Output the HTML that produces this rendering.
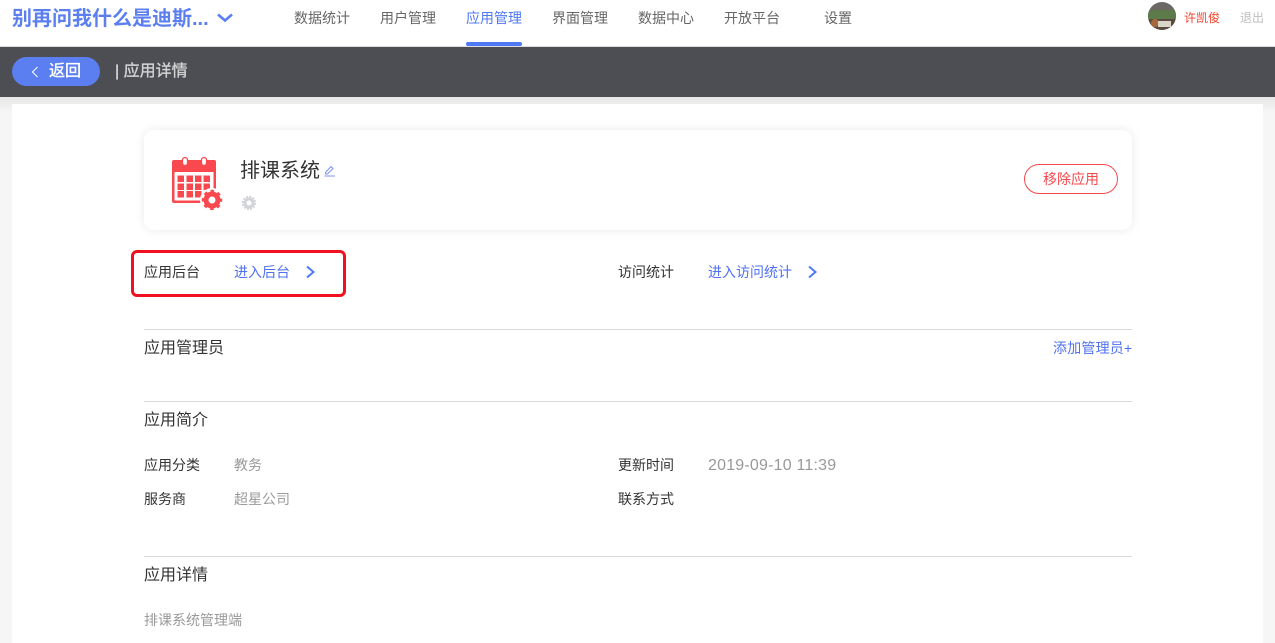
<!DOCTYPE html>
<html lang="zh-CN"><head><meta charset="utf-8"><title>应用详情</title>
<style>
*{box-sizing:border-box;margin:0;padding:0}
html,body{width:1275px;height:643px;overflow:hidden;background:#f6f6f6;font-family:"Liberation Sans","Noto Sans CJK SC",sans-serif}
.a{position:absolute;white-space:nowrap;line-height:20px}
.nav{top:8px;font-size:14px;color:#666}
.hr{position:absolute;left:144px;width:988px;height:1px;background:#d9d9d9}
.l{font-size:14px;color:#333}
.g{font-size:14px;color:#999}
.b{font-size:14px;color:#4f70f5}
.h{font-size:16px;color:#333}
</style></head><body>
<div style="position:absolute;left:0;top:0;width:1275px;height:47px;background:#fff;border-bottom:1px solid #ddd"></div>
<div class="a" style="left:12px;top:6px;font-size:20px;line-height:26px;font-weight:bold;color:#5b7ff0">别再问我什么是迪斯...</div>
<svg style="position:absolute;left:216px;top:13px" width="18" height="10" viewBox="0 0 18 10"><path d="M2 1.500L9 7.500L16 1.500" fill="none" stroke="#5b7ff0" stroke-width="2.600"/></svg>
<div class="a nav" style="left:294px">数据统计</div>
<div class="a nav" style="left:380px">用户管理</div>
<div class="a nav" style="left:466px;color:#4f78f5">应用管理</div>
<div style="position:absolute;left:466px;top:42px;width:56px;height:4px;border-radius:2px;background:#4f78f5"></div>
<div class="a nav" style="left:552px">界面管理</div>
<div class="a nav" style="left:638px">数据中心</div>
<div class="a nav" style="left:724px">开放平台</div>
<div class="a nav" style="left:824px">设置</div>
<svg style="position:absolute;left:1148px;top:2px" width="28" height="28" viewBox="0 0 28 28"><defs><clipPath id="c"><circle cx="14" cy="14" r="14"/></clipPath></defs><g clip-path="url(#c)"><rect width="28" height="28" fill="#6b6866"/><rect y="8" width="28" height="9" fill="#5d7a4a"/><rect y="17" width="28" height="11" fill="#5a4a40"/><circle cx="7" cy="21" r="4" fill="#a8673a"/><rect x="10" y="19" width="13" height="6" fill="#d9d6c8"/></g></svg>
<div class="a" style="left:1184px;top:8px;font-size:12px;color:#f5402c">许凯俊</div>
<div class="a" style="left:1240px;top:8px;font-size:12px;color:#bdbdbd">退出</div>

<div style="position:absolute;left:0;top:47px;width:1275px;height:50px;background:#4d4e53"></div>
<div style="position:absolute;left:12px;top:57px;width:88px;height:29px;border-radius:15px;background:#5b7ff0"></div>
<svg style="position:absolute;left:30px;top:65px" width="10" height="14" viewBox="0 0 10 14"><path d="M7.500 2L2.500 7L7.500 12" fill="none" stroke="#fff" stroke-width="1"/></svg>
<div class="a" style="left:49px;top:62px;font-size:16px;color:#fff;-webkit-text-stroke:.35px #fff">返回</div>
<div class="a" style="left:115px;top:62px;font-size:16px;color:#d4d4d4;-webkit-text-stroke:.35px #d4d4d4">| 应用详情</div>

<div style="position:absolute;left:0;top:97px;width:1275px;height:16px;background:linear-gradient(#e6e6e6,#f6f6f6)"></div>
<div style="position:absolute;left:12px;top:104px;width:1251px;height:539px;background:#fff"></div>

<div style="position:absolute;left:144px;top:130px;width:988px;height:100px;background:#fff;border-radius:10px;box-shadow:0 0 10px rgba(0,0,0,.09)"></div>
<svg style="position:absolute;left:170px;top:156px" width="54" height="54" viewBox="0 0 54 54">
<rect x="2" y="4" width="44" height="43" rx="2" fill="#f9494f"/>
<rect x="4.500" y="16" width="39" height="28.500" fill="#fff"/>
<rect x="12.500" y="1.500" width="5" height="8" rx="2.500" fill="#fff" stroke="#f9494f" stroke-width="1.300"/>
<rect x="31.500" y="1.500" width="5" height="8" rx="2.500" fill="#fff" stroke="#f9494f" stroke-width="1.300"/>
<g fill="#f9494f"><rect x="7.500" y="19.500" width="6.500" height="6.500"/><rect x="16.500" y="19.500" width="6.500" height="6.500"/><rect x="25" y="19.500" width="6.500" height="6.500"/><rect x="33.500" y="19.500" width="6.500" height="6.500"/><rect x="7.500" y="27.500" width="6.500" height="6.500"/><rect x="16.500" y="27.500" width="6.500" height="6.500"/><rect x="25" y="27.500" width="6.500" height="6.500"/><rect x="33.500" y="27.500" width="6.500" height="6.500"/><rect x="7.500" y="35" width="6.500" height="6.500"/><rect x="16.500" y="35" width="6.500" height="6.500"/><rect x="25" y="35" width="6.500" height="6.500"/></g>
<circle cx="42" cy="44" r="12" fill="#fff"/>
<circle cx="42" cy="44" r="6" fill="none" stroke="#f9494f" stroke-width="5"/>
<circle cx="42" cy="44" r="8.500" fill="none" stroke="#f9494f" stroke-width="3.500" stroke-dasharray="3.300 3.380" stroke-dashoffset="1.650"/>
</svg>
<div class="a" style="left:240px;top:158px;font-size:20px;line-height:26px;color:#333">排课系统</div>
<svg style="position:absolute;left:324px;top:164px" width="12" height="13" viewBox="0 0 12 13"><path d="M1.500 8.500L7 2.500L9 4.500L3.500 10H1.500ZM0.500 12H11" fill="none" stroke="#7d92f3" stroke-width="1"/></svg>
<svg style="position:absolute;left:241px;top:195px" width="16" height="16" viewBox="0 0 16 16"><circle cx="8" cy="8" r="4" fill="none" stroke="#d2d4da" stroke-width="3"/><circle cx="8" cy="8" r="6.200" fill="none" stroke="#d2d4da" stroke-width="2" stroke-dasharray="2 1.250"/></svg>
<div class="a" style="left:1024px;top:164px;width:94px;height:30px;border:1px solid #f5484d;border-radius:15px;text-align:center;font-size:14px;line-height:29px;color:#f5484d">移除应用</div>

<div style="position:absolute;left:131px;top:250px;width:215px;height:47px;border:3px solid #f0101f;border-radius:6px"></div>
<div class="a l" style="left:144px;top:262px">应用后台</div>
<div class="a b" style="left:234px;top:262px">进入后台</div>
<svg style="position:absolute;left:305px;top:265px" width="12" height="14" viewBox="0 0 12 14"><path d="M2 1.500L8.500 7L2 12.500" fill="none" stroke="#4f78f5" stroke-width="2"/></svg>
<div class="a l" style="left:618px;top:262px">访问统计</div>
<div class="a b" style="left:708px;top:262px">进入访问统计</div>
<svg style="position:absolute;left:807px;top:265px" width="12" height="14" viewBox="0 0 12 14"><path d="M2 1.500L8.500 7L2 12.500" fill="none" stroke="#4f78f5" stroke-width="2"/></svg>

<div class="hr" style="top:329px"></div>
<div class="a h" style="left:144px;top:339px">应用管理员</div>
<div class="a b" style="left:1053px;top:338px;letter-spacing:.2px">添加管理员+</div>

<div class="hr" style="top:401px"></div>
<div class="a h" style="left:144px;top:411px">应用简介</div>
<div class="a l" style="left:144px;top:455px">应用分类</div>
<div class="a g" style="left:234px;top:455px">教务</div>
<div class="a l" style="left:618px;top:455px">更新时间</div>
<div class="a g" style="left:708px;top:456px;font-size:16px;letter-spacing:.2px">2019-09-10 11:39</div>
<div class="a l" style="left:144px;top:489px">服务商</div>
<div class="a g" style="left:234px;top:489px">超星公司</div>
<div class="a l" style="left:618px;top:489px">联系方式</div>

<div class="hr" style="top:556px"></div>
<div class="a h" style="left:144px;top:566px">应用详情</div>
<div class="a g" style="left:144px;top:610px">排课系统管理端</div>
</body></html>
